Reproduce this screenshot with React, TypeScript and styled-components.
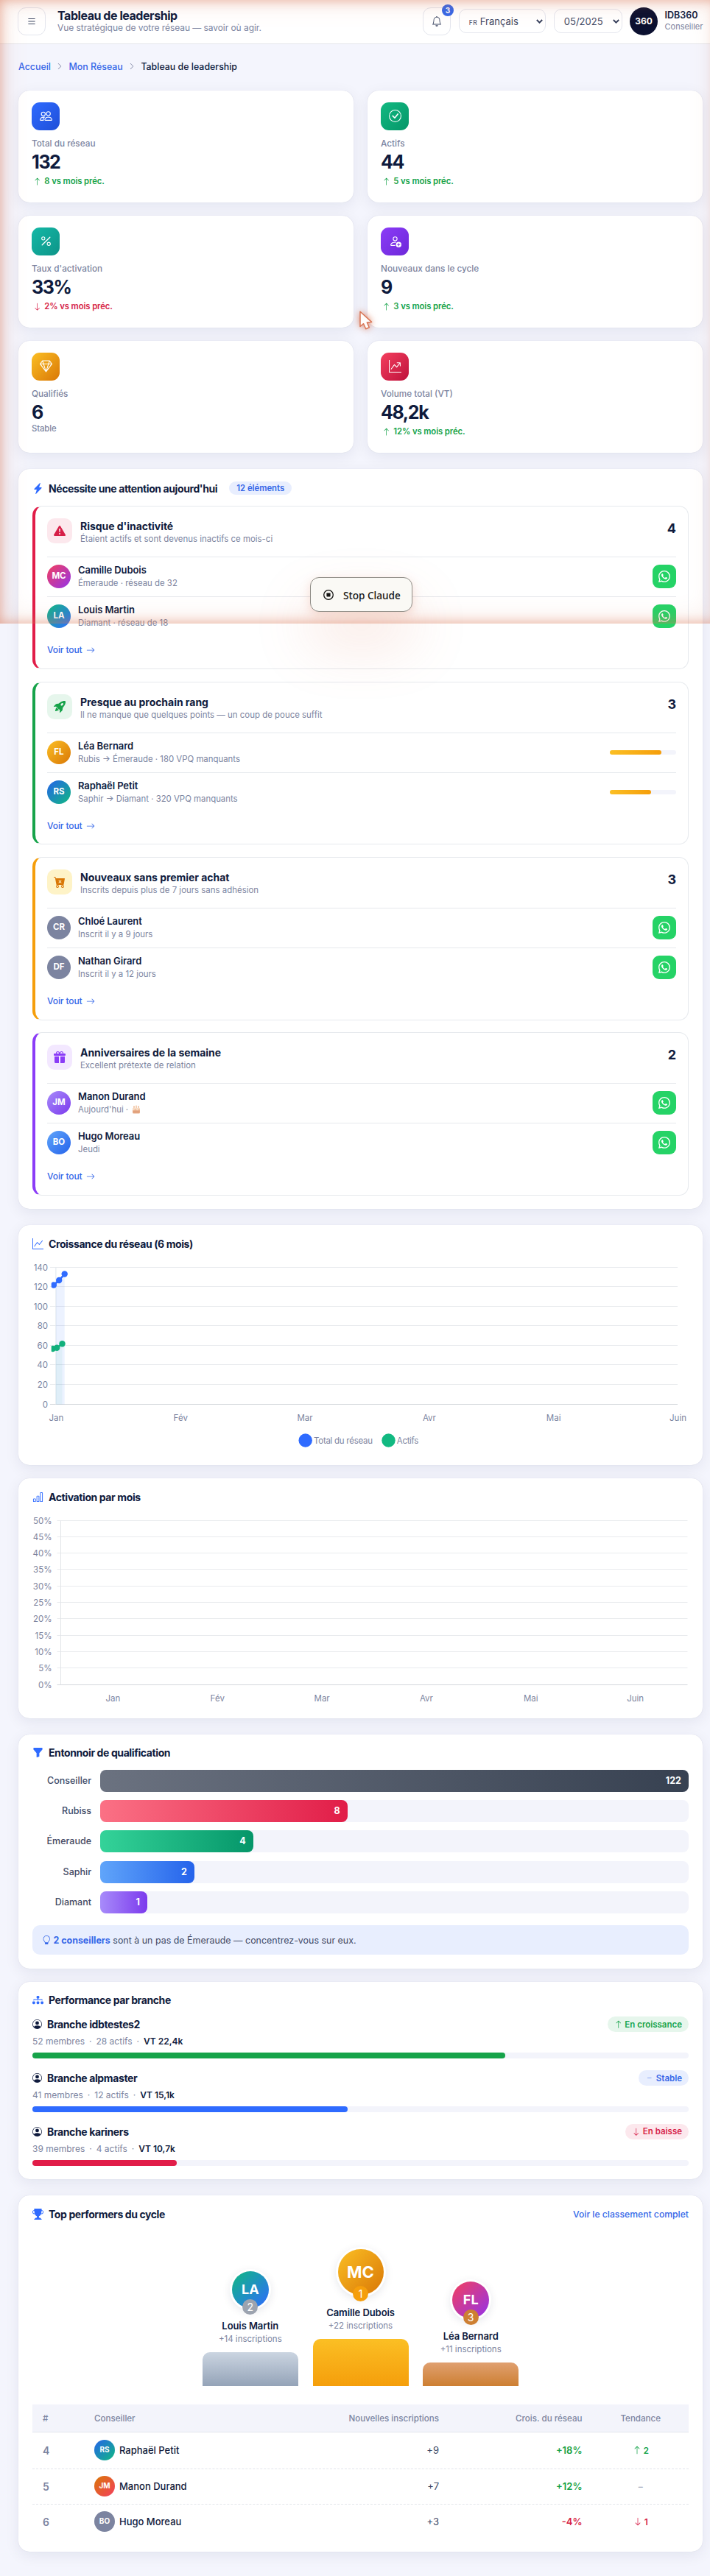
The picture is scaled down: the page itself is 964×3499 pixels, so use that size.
import React from 'react'
import styled, { createGlobalStyle } from 'styled-components'
import {
  BsArrowDown,
  BsArrowRight,
  BsArrowUp,
  BsBarChart,
  BsBell,
  BsCartXFill,
  BsCheckCircle,
  BsChevronRight,
  BsDash,
  BsDiagram3Fill,
  BsExclamationTriangleFill,
  BsFunnelFill,
  BsGem,
  BsGiftFill,
  BsGraphUp,
  BsGraphUpArrow,
  BsLightbulb,
  BsLightningChargeFill,
  BsList,
  BsPeople,
  BsPercent,
  BsPersonAdd,
  BsPersonCircle,
  BsRocketTakeoffFill,
  BsTrophyFill,
  BsWhatsapp,
} from 'react-icons/bs'

const colors = {
  ink: '#0f1b3d',
  text: '#3f4a66',
  muted: '#7c84a0',
  blue: '#2f6bff',
  link: '#3567e8',
  line: '#e6e9ed',
  track: '#f3f4fb',
  green: '#16a34a',
  red: '#d61f48',
}

type Trend = 'up' | 'down' | 'flat'

const kpis = [
  { label: 'Total du réseau', value: '132', delta: '8 vs mois préc.', trend: 'up', icon: <BsPeople />, from: '#2f6bff', to: '#1f4fd8' },
  { label: 'Actifs', value: '44', delta: '5 vs mois préc.', trend: 'up', icon: <BsCheckCircle />, from: '#12b981', to: '#059669' },
  { label: "Taux d'activation", value: '33%', delta: '2% vs mois préc.', trend: 'down', icon: <BsPercent />, from: '#14b8a6', to: '#0d9488' },
  { label: 'Nouveaux dans le cycle', value: '9', delta: '3 vs mois préc.', trend: 'up', icon: <BsPersonAdd />, from: '#8b3cf7', to: '#6d28d9' },
  { label: 'Qualifiés', value: '6', delta: 'Stable', trend: 'flat', icon: <BsGem />, from: '#fbbf24', to: '#d97706' },
  { label: 'Volume total (VT)', value: '48,2k', delta: '12% vs mois préc.', trend: 'up', icon: <BsGraphUpArrow />, from: '#f43f5e', to: '#be123c' },
]

const avatars: Record<string, string> = {
  pink: 'linear-gradient(135deg, #f43f5e, #9333ea)',
  teal: 'linear-gradient(135deg, #10b981, #2f6bff)',
  gold: 'linear-gradient(135deg, #fbbf24, #d97706)',
  sea: 'linear-gradient(135deg, #2563eb, #10b981)',
  grey: '#7c84a0',
  violet: 'linear-gradient(135deg, #a78bfa, #7c3aed)',
  sky: 'linear-gradient(135deg, #60a5fa, #2563eb)',
  fire: 'linear-gradient(135deg, #d97706, #f43f5e)',
}

interface Person {
  initials: string
  avatar: string
  name: string
  detail: string
  progress?: number
  cake?: boolean
}

interface Group {
  title: string
  subtitle: string
  count: number
  accent: string
  tint: string
  iconColor: string
  icon: React.ReactNode
  people: Person[]
}

const groups: Group[] = [
  {
    title: "Risque d'inactivité",
    subtitle: 'Étaient actifs et sont devenus inactifs ce mois-ci',
    count: 4,
    accent: '#e11d48',
    tint: '#fce8ed',
    iconColor: '#d61f48',
    icon: <BsExclamationTriangleFill />,
    people: [
      { initials: 'MC', avatar: 'pink', name: 'Camille Dubois', detail: 'Émeraude · réseau de 32' },
      { initials: 'LA', avatar: 'teal', name: 'Louis Martin', detail: 'Diamant · réseau de 18' },
    ],
  },
  {
    title: 'Presque au prochain rang',
    subtitle: 'Il ne manque que quelques points — un coup de pouce suffit',
    count: 3,
    accent: '#16a34a',
    tint: '#e6f6ec',
    iconColor: '#16a34a',
    icon: <BsRocketTakeoffFill />,
    people: [
      { initials: 'FL', avatar: 'gold', name: 'Léa Bernard', detail: 'Rubis → Émeraude · 180 VPQ manquants', progress: 78 },
      { initials: 'RS', avatar: 'sea', name: 'Raphaël Petit', detail: 'Saphir → Diamant · 320 VPQ manquants', progress: 62 },
    ],
  },
  {
    title: 'Nouveaux sans premier achat',
    subtitle: 'Inscrits depuis plus de 7 jours sans adhésion',
    count: 3,
    accent: '#f59e0b',
    tint: '#fef3c7',
    iconColor: '#d97706',
    icon: <BsCartXFill />,
    people: [
      { initials: 'CR', avatar: 'grey', name: 'Chloé Laurent', detail: 'Inscrit il y a 9 jours' },
      { initials: 'DF', avatar: 'grey', name: 'Nathan Girard', detail: 'Inscrit il y a 12 jours' },
    ],
  },
  {
    title: 'Anniversaires de la semaine',
    subtitle: 'Excellent prétexte de relation',
    count: 2,
    accent: '#8b3cf7',
    tint: '#f3e8ff',
    iconColor: '#8b3cf7',
    icon: <BsGiftFill />,
    people: [
      { initials: 'JM', avatar: 'violet', name: 'Manon Durand', detail: "Aujourd'hui · ", cake: true },
      { initials: 'BO', avatar: 'sky', name: 'Hugo Moreau', detail: 'Jeudi' },
    ],
  },
]

const funnel = [
  { label: 'Conseiller', value: 122, width: 100, from: '#6b7280', to: '#374151' },
  { label: 'Rubiss', value: 8, width: 42, from: '#fb7185', to: '#e11d48' },
  { label: 'Émeraude', value: 4, width: 26, from: '#34d399', to: '#059669' },
  { label: 'Saphir', value: 2, width: 16, from: '#60a5fa', to: '#2563eb' },
  { label: 'Diamant', value: 1, width: 8, from: '#a78bfa', to: '#7c3aed' },
]

const branches = [
  { name: 'idbtestes2', members: 52, active: 28, vt: '22,4k', trend: 'up', label: 'En croissance', width: 72, color: '#16a34a', tint: '#e6f6ec', fg: '#16a34a' },
  { name: 'alpmaster', members: 41, active: 12, vt: '15,1k', trend: 'flat', label: 'Stable', width: 48, color: '#2f6bff', tint: '#e8eefe', fg: '#3567e8' },
  { name: 'kariners', members: 39, active: 4, vt: '10,7k', trend: 'down', label: 'En baisse', width: 22, color: '#e11d48', tint: '#fce8ed', fg: '#d61f48' },
]

const podium = [
  { place: 2, initials: 'LA', avatar: 'teal', name: 'Louis Martin', signups: 14, height: 46, badge: '#9ca3af', from: '#cbd5e1', to: '#94a3b8' },
  { place: 1, initials: 'MC', avatar: 'gold', name: 'Camille Dubois', signups: 22, height: 64, badge: '#f59e0b', from: '#fbbf24', to: '#f59e0b' },
  { place: 3, initials: 'FL', avatar: 'pink', name: 'Léa Bernard', signups: 11, height: 32, badge: '#cd7f32', from: '#e0a070', to: '#cd7f32' },
]

const ranking = [
  { rank: 4, initials: 'RS', avatar: 'sea', name: 'Raphaël Petit', signups: '+9', growth: '+18%', trend: 'up', move: 2 },
  { rank: 5, initials: 'JM', avatar: 'fire', name: 'Manon Durand', signups: '+7', growth: '+12%', trend: 'flat', move: 0 },
  { rank: 6, initials: 'BO', avatar: 'grey', name: 'Hugo Moreau', signups: '+3', growth: '-4%', trend: 'down', move: 1 },
]

const months = ['Jan', 'Fév', 'Mar', 'Avr', 'Mai', 'Juin']

const TrendIcon = ({ trend }: { trend: string }) => {
  if (trend === 'up') return <BsArrowUp />
  if (trend === 'down') return <BsArrowDown />
  return <BsDash />
}

const Cake = () => (
  <CakeSvg width="12" height="12" viewBox="0 0 12 12">
    <path d="M3 1v3M6 .6V4M9 1v3" stroke="#e9a06a" strokeWidth="1" />
    <rect x="1" y="4" width="10" height="7.5" rx="1.5" fill="#e9b08c" />
    <path d="M1 6.5q1.3 1.5 2.5 0t2.5 0 2.5 0 2.5 0V5.2Q11 4 9.500 4h-7Q1 4 1 5.200z" fill="#f8dcc4" />
    <path d="M1.500 9.300h9" stroke="#cf7f55" strokeWidth=".8" />
  </CakeSvg>
)

const Chevron = () => (
  <svg width="9" height="6" viewBox="0 0 9 6">
    <path d="M.8 1l3.700 3.700L8.200 1" fill="none" stroke="#353f5c" strokeWidth="1.900" />
  </svg>
)

const GrowthChart = () => {
  const top = 9.600
  const bottom = 195.600
  const left = 31.900
  const right = 876
  const ticks = [140, 120, 100, 80, 60, 40, 20, 0]
  return (
    <ChartSvg width="890" height="265" viewBox="0 0 890 265">
      {ticks.map(t => {
        const y = Math.round(bottom - ((bottom - top) * t) / 140) - 0.500
        return (
          <g key={t}>
            <line x1={left - 8} x2={right} y1={y} y2={y} stroke={t === 0 ? '#d3d7dc' : '#e9ebee'} />
            <text x={21} y={y + 4} textAnchor="end">{t}</text>
          </g>
        )
      })}
      <line x1={left} x2={left} y1={top} y2={bottom} stroke="#dfe7ee" />
      <path d="M32 30L36.200 27 43.700 18.500V195.500H32z" fill="#2f6bff" fillOpacity=".09" />
      <path d="M32 119L33.200 119 40.500 113.500V195.500H32z" fill="#12b981" fillOpacity=".06" />
      <path d="M28.900 33.500L36.200 27 43.700 18.500" stroke="#2f6bff" strokeWidth="2.500" fill="none" />
      <path d="M27.700 120L33.200 118.800 40.500 113.300" stroke="#12b981" strokeWidth="2.500" fill="none" />
      <clipPath id="plot">
        <rect x="25.700" y="0" width="864" height="200" />
      </clipPath>
      <g clipPath="url(#plot)">
        {[[28.900, 33.500], [36.200, 27], [43.700, 18.500]].map(([x, y]) => <circle key={x} cx={x} cy={y} r="4.200" fill="#2f6bff" />)}
        {[[27.700, 120], [33.200, 118.800], [40.500, 113.300]].map(([x, y]) => <circle key={x} cx={x} cy={y} r="4.200" fill="#12b07c" />)}
      </g>
      {months.map((m, i) => (
        <text key={m} x={left + (i * (right - left)) / 5 + 0.500} y="217.500" textAnchor="middle">{m}</text>
      ))}
      <circle cx="370.700" cy="244.500" r="9.200" fill="#2f6bff" />
      <text x="382" y="248.500" textLength="80">Total du réseau</text>
      <circle cx="483.500" cy="244.500" r="9.200" fill="#12b981" />
      <text x="494.800" y="248.500" textLength="29.500">Actifs</text>
    </ChartSvg>
  )
}

const ActivationChart = () => {
  const top = 9.500
  const bottom = 232.500
  const left = 38.500
  const right = 889.500
  const ticks = [50, 45, 40, 35, 30, 25, 20, 15, 10, 5, 0]
  return (
    <ChartSvg width="890" height="265" viewBox="0 0 890 265">
      {ticks.map(t => {
        const y = Math.round(bottom - ((bottom - top) * t) / 50) - 0.500
        return (
          <g key={t}>
            <line x1={left - 5} x2={right} y1={y} y2={y} stroke={t === 0 ? '#d3d7dc' : '#e9ebee'} />
            <text x={26.500} y={y + 4} textAnchor="end">{t}%</text>
          </g>
        )
      })}
      <line x1={left} x2={left} y1={top} y2={bottom} stroke="#e2e4e8" />
      {months.map((m, i) => (
        <text key={m} x={left + 70.900 + i * 141.850} y="254.500" textAnchor="middle">{m}</text>
      ))}
    </ChartSvg>
  )
}

const PersonRow = ({ person }: { person: Person }) => (
  <Row>
    <Avatar $bg={avatars[person.avatar]} $size={32}>{person.initials}</Avatar>
    <RowText>
      <RowName>{person.name}</RowName>
      <RowDetail>
        {person.detail}
        {person.cake && <Cake />}
      </RowDetail>
    </RowText>
    {person.progress ? (
      <MiniTrack>
        <MiniFill style={{ width: `${person.progress}%` }} />
      </MiniTrack>
    ) : (
      <WhatsappButton>
        <BsWhatsapp />
      </WhatsappButton>
    )}
  </Row>
)

const App = () => {
  return (
    <Page>
      <GlobalStyle />
      <Header>
        <SquareButton>
          <BsList />
        </SquareButton>
        <Heading>
          <PageTitle>Tableau de leadership</PageTitle>
          <PageSubtitle>Vue stratégique de votre réseau — savoir où agir.</PageSubtitle>
        </Heading>
        <Tools>
          <SquareButton>
            <BsBell />
            <Notification>3</Notification>
          </SquareButton>
          <Select $width={118.500}>
            <span><Flag>FR</Flag> Français</span>
            <Chevron />
          </Select>
          <Select $width={93.500}>
            <span>05/2025</span>
            <Chevron />
          </Select>
          <Profile>
            <ProfileAvatar>360</ProfileAvatar>
            <ProfileText>
              <ProfileName>IDB360</ProfileName>
              <ProfileRole>Conseiller</ProfileRole>
            </ProfileText>
          </Profile>
        </Tools>
      </Header>

      <Main>
        <Breadcrumb>
          <a>Accueil</a>
          <BsChevronRight />
          <a>Mon Réseau</a>
          <BsChevronRight />
          <span>Tableau de leadership</span>
        </Breadcrumb>

        <KpiGrid>
          {kpis.map(kpi => (
            <KpiCard key={kpi.label}>
              <KpiIcon $from={kpi.from} $to={kpi.to}>{kpi.icon}</KpiIcon>
              <KpiLabel>{kpi.label}</KpiLabel>
              <KpiValue>{kpi.value}</KpiValue>
              <KpiDelta $trend={kpi.trend as Trend}>
                {kpi.trend !== 'flat' && <TrendIcon trend={kpi.trend} />}
                {kpi.delta}
              </KpiDelta>
            </KpiCard>
          ))}
        </KpiGrid>

        <Card $height={1005.300} $gap={21.700}>
          <CardHead $height={50.600} $top={3}>
            <BsLightningChargeFill />
            <CardTitle>Nécessite une attention aujourd'hui</CardTitle>
            <CountPill>12 éléments</CountPill>
          </CardHead>
          <Groups>
            {groups.map(group => (
              <GroupCard key={group.title} $accent={group.accent}>
                <GroupHead>
                  <GroupIcon $bg={group.tint} $fg={group.iconColor}>{group.icon}</GroupIcon>
                  <GroupText>
                    <GroupTitle>{group.title}</GroupTitle>
                    <GroupSubtitle>{group.subtitle}</GroupSubtitle>
                  </GroupText>
                  <GroupCount>{group.count}</GroupCount>
                </GroupHead>
                {group.people.map(person => <PersonRow key={person.name} person={person} />)}
                <SeeAll>
                  Voir tout <BsArrowRight />
                </SeeAll>
              </GroupCard>
            ))}
          </Groups>
        </Card>

        <Card $height={326.300} $gap={18}>
          <CardHead $height={48} $top={4}>
            <BsGraphUp />
            <CardTitle>Croissance du réseau (6 mois)</CardTitle>
          </CardHead>
          <GrowthChart />
        </Card>

        <Card $height={326} $gap={21.700}>
          <CardHead $height={48} $top={4}>
            <BsBarChart />
            <CardTitle>Activation par mois</CardTitle>
          </CardHead>
          <ActivationChart />
        </Card>

        <Card $height={318.300} $gap={18}>
          <CardHead $height={48.300} $top={2}>
            <BsFunnelFill />
            <CardTitle>Entonnoir de qualification</CardTitle>
          </CardHead>
          <FunnelList>
            {funnel.map(step => (
              <FunnelRow key={step.label}>
                <FunnelLabel>{step.label}</FunnelLabel>
                <FunnelTrack>
                  <FunnelBar $from={step.from} $to={step.to} style={{ width: `${step.width}%` }}>{step.value}</FunnelBar>
                </FunnelTrack>
              </FunnelRow>
            ))}
          </FunnelList>
          <Tip>
            <BsLightbulb />
            <p><b>2 conseillers</b> sont à un pas de Émeraude — concentrez-vous sur eux.</p>
          </Tip>
        </Card>

        <Card $height={268} $gap={21.700}>
          <CardHead $height={47.500} $top={2}>
            <BsDiagram3Fill />
            <CardTitle>Performance par branche</CardTitle>
          </CardHead>
          {branches.map(branch => (
            <Branch key={branch.name}>
              <BranchHead>
                <BsPersonCircle />
                <BranchName>Branche {branch.name}</BranchName>
                <BranchPill $bg={branch.tint} $fg={branch.fg}>
                  <TrendIcon trend={branch.trend} />
                  {branch.label}
                </BranchPill>
              </BranchHead>
              <BranchStats>
                <span>{branch.members} membres</span>
                <i>·</i>
                <span>{branch.active} actifs</span>
                <i>·</i>
                <b>VT {branch.vt}</b>
              </BranchStats>
              <BranchTrack>
                <BranchFill $color={branch.color} style={{ width: `${branch.width}%` }} />
              </BranchTrack>
            </Branch>
          ))}
        </Card>

        <Card $height={484.300} $gap={33}>
          <CardHead $height={51} $top={0}>
            <BsTrophyFill />
            <CardTitle>Top performers du cycle</CardTitle>
            <HeadLink>Voir le classement complet</HeadLink>
          </CardHead>
          <Podium>
            {podium.map(p => (
              <PodiumColumn key={p.place}>
                <PodiumAvatar $bg={avatars[p.avatar]} $big={p.place === 1}>
                  {p.initials}
                  <Medal $bg={p.badge}>{p.place}</Medal>
                </PodiumAvatar>
                <PodiumName>{p.name}</PodiumName>
                <PodiumDetail>+{p.signups} inscriptions</PodiumDetail>
                <PodiumBlock $from={p.from} $to={p.to} $height={p.height} />
              </PodiumColumn>
            ))}
          </Podium>
          <Table>
            <TableHead>
              <span>#</span>
              <span>Conseiller</span>
              <Right>Nouvelles inscriptions</Right>
              <Right>Crois. du réseau</Right>
              <Center>Tendance</Center>
            </TableHead>
            {ranking.map(r => (
              <TableRow key={r.rank}>
                <Rank>{r.rank}</Rank>
                <Advisor>
                  <Avatar $bg={avatars[r.avatar]} $size={28}>{r.initials}</Avatar>
                  {r.name}
                </Advisor>
                <Right>{r.signups}</Right>
                <Growth $down={r.trend === 'down'}>{r.growth}</Growth>
                <Move $trend={r.trend as Trend}>
                  {r.trend === 'flat' ? '–' : <><TrendIcon trend={r.trend} /> {r.move}</>}
                </Move>
              </TableRow>
            ))}
          </Table>
        </Card>
      </Main>

      <GlowClip>
        <GlowFrame />
      </GlowClip>
      <StopButton>
        <svg width="16" height="16" viewBox="0 0 16 16">
          <circle cx="8" cy="8" r="6.300" fill="none" stroke="#141413" strokeWidth="1.300" />
          <rect x="5.400" y="5.400" width="5.200" height="5.200" rx=".8" fill="#141413" />
        </svg>
        Stop Claude
      </StopButton>
      <Pointer width="18" height="26" viewBox="0 0 18 26">
        <path d="M1 1.200V21.500L5.600 17.700L8.700 24.700L13.300 22.700L10.300 15.900L16.600 15.400Z" fill="#fffdfb" stroke="#d97757" strokeWidth="1.500" strokeLinejoin="round" />
      </Pointer>
    </Page>
  )
}

export default App

const GlobalStyle = createGlobalStyle`
  * {
    box-sizing: border-box;
  }

  body {
    margin: 0;
    background: #f4f5fd;
    font-family: 'Inter', sans-serif;
    color: ${colors.ink};
  }

  p {
    margin: 0;
  }
`

const Page = styled.div`
  position: relative;
  width: 964px;
  height: 3499px;
  overflow: hidden;
`

const Header = styled.header`
  display: flex;
  align-items: center;
  height: 60px;
  padding: 0 9px 2px 24px;
  background: #fff;
  border-bottom: 1px solid #e3e5ea;
`

const SquareButton = styled.div`
  position: relative;
  display: flex;
  align-items: center;
  justify-content: center;
  width: 38px;
  height: 38px;
  border: 1px solid #e4e6ee;
  border-radius: 11px;
  color: ${colors.text};
  font-size: 14px;
`

const Heading = styled.div`
  margin-left: 16px;
`

const PageTitle = styled.h1`
  margin: 0;
  font-size: 16px;
  font-weight: 700;
  line-height: 18px;
  letter-spacing: -0.45px;
`

const PageSubtitle = styled.p`
  font-size: 12px;
  line-height: 16px;
  letter-spacing: -0.06px;
  color: ${colors.muted};
`

const Tools = styled.div`
  display: flex;
  align-items: center;
  gap: 10.7px;
  margin-left: auto;
`

const Notification = styled.span`
  position: absolute;
  top: -5px;
  right: -5px;
  width: 16px;
  height: 16px;
  border-radius: 50%;
  background: ${colors.link};
  color: #fff;
  font-size: 10px;
  font-weight: 700;
  line-height: 16px;
  text-align: center;
`

const Select = styled.div<{ $width: number }>`
  display: flex;
  align-items: center;
  justify-content: space-between;
  width: ${props => props.$width}px;
  height: 33px;
  padding: 0 3px 0 13px;
  border: 1px solid #e4e6ee;
  border-radius: 10px;
  font-size: 13px;
  color: ${colors.text};
`

const Flag = styled.span`
  font-size: 8.5px;
  letter-spacing: 0.5px;
`

const Profile = styled.div`
  display: flex;
  align-items: center;
  gap: 9.5px;
  margin-left: -1px;
`

const ProfileAvatar = styled.div`
  width: 38px;
  height: 38px;
  border-radius: 50%;
  background: #0b1030;
  color: #fff;
  font-size: 12px;
  font-weight: 700;
  line-height: 38px;
  text-align: center;
`

const ProfileText = styled.div`
  width: 52.5px;
`

const ProfileName = styled.div`
  font-size: 12.5px;
  font-weight: 600;
  line-height: 16px;
`

const ProfileRole = styled.div`
  font-size: 11px;
  line-height: 15px;
  color: ${colors.muted};
`

const Main = styled.main`
  padding: 20px 10px 0 25px;
`

const Breadcrumb = styled.nav`
  display: flex;
  align-items: center;
  gap: 7.3px;
  height: 20px;
  margin-bottom: 22.7px;
  font-size: 12.4px;
  font-weight: 550;

  a {
    color: ${colors.link};
  }

  svg {
    width: 10px;
    height: 10px;
    color: ${colors.muted};
  }
`

const KpiGrid = styled.section`
  display: grid;
  grid-template-columns: 1fr 1fr;
  grid-auto-rows: 152.3px;
  gap: 17.7px 19px;
  margin-bottom: 21.7px;
`

const cardShadow = '0 0 1px rgba(20, 30, 70, 0.18), 0 5px 20px rgba(20, 30, 70, 0.075)'

const KpiCard = styled.article`
  padding: 16px 18px;
  border-radius: 15px;
  background: #fff;
  box-shadow: ${cardShadow};
`

const KpiIcon = styled.div<{ $from: string; $to: string }>`
  display: flex;
  align-items: center;
  justify-content: center;
  width: 38px;
  height: 38px;
  border-radius: 11px;
  background: linear-gradient(135deg, ${props => props.$from}, ${props => props.$to});
  color: #fff;
  font-size: 17px;
`

const KpiLabel = styled.div`
  margin-top: 9px;
  font-size: 11.75px;
  font-weight: 500;
  line-height: 18px;
  color: ${colors.muted};
`

const KpiValue = styled.div`
  margin-top: 1px;
  font-size: 25px;
  font-weight: 700;
  line-height: 30px;
  letter-spacing: -1.4px;
`

const KpiDelta = styled.div<{ $trend: Trend }>`
  display: flex;
  align-items: center;
  gap: 4px;
  margin-top: ${props => (props.$trend === 'flat' ? 0.5 : 4)}px;
  padding-left: ${props => (props.$trend === 'flat' ? 0 : 2)}px;
  font-size: 11.3px;
  font-weight: ${props => (props.$trend === 'flat' ? 500 : 600)};
  line-height: 15px;
  letter-spacing: -0.1px;
  color: ${props => ({ up: colors.green, down: colors.red, flat: colors.muted })[props.$trend]};
`

const Card = styled.section<{ $height: number; $gap: number }>`
  height: ${props => props.$height}px;
  margin-bottom: ${props => props.$gap}px;
  padding: 0 19px;
  border-radius: 15px;
  background: #fff;
  box-shadow: ${cardShadow};
`

const CardHead = styled.div<{ $height: number; $top: number }>`
  display: flex;
  align-items: center;
  height: ${props => props.$height}px;
  padding-top: ${props => props.$top}px;

  > svg {
    width: 15px;
    height: 15px;
    margin-right: 7px;
    color: ${colors.blue};
  }
`

const CardTitle = styled.h2`
  margin: 0;
  font-size: 14px;
  font-weight: 650;
  letter-spacing: -0.4px;
  white-space: nowrap;
`

const CountPill = styled.span`
  margin-left: 16px;
  padding: 0 10px;
  border-radius: 9px;
  background: #e8eefe;
  color: ${colors.link};
  font-size: 11.3px;
  font-weight: 600;
  line-height: 18px;
`

const HeadLink = styled.a`
  margin-left: auto;
  color: ${colors.link};
  font-size: 12.2px;
  font-weight: 500;
`

const Groups = styled.div`
  display: grid;
  grid-auto-rows: 221.7px;
  gap: 16.7px;
`

const GroupCard = styled.article<{ $accent: string }>`
  padding: 0 16px;
  border: 1px solid ${colors.line};
  border-left: 4px solid ${props => props.$accent};
  border-radius: 13px;
`

const GroupHead = styled.div`
  display: flex;
  height: 68px;
  padding-top: 16px;
`

const GroupIcon = styled.div<{ $bg: string; $fg: string }>`
  display: flex;
  align-items: center;
  justify-content: center;
  width: 34px;
  height: 34px;
  border-radius: 10px;
  background: ${props => props.$bg};
  color: ${props => props.$fg};
  font-size: 16px;
`

const GroupText = styled.div`
  flex: 1;
  padding: 2px 0 0 11px;
`

const GroupTitle = styled.h3`
  margin: 0;
  font-size: 14px;
  font-weight: 650;
  line-height: 18px;
  letter-spacing: -0.04px;
`

const GroupSubtitle = styled.p`
  font-size: 11.45px;
  line-height: 17px;
  color: ${colors.muted};
`

const GroupCount = styled.div`
  font-size: 18px;
  font-weight: 700;
  line-height: 28px;
`

const Row = styled.div`
  display: flex;
  align-items: center;
  height: 54px;
  padding-bottom: 1px;
  border-top: 1px solid ${colors.line};
`

const Avatar = styled.div<{ $bg: string; $size: number }>`
  width: ${props => props.$size}px;
  height: ${props => props.$size}px;
  border-radius: 50%;
  background: ${props => props.$bg};
  color: #fff;
  font-size: ${props => (props.$size > 30 ? 11.5 : 10)}px;
  font-weight: 700;
  line-height: ${props => props.$size - 1}px;
  text-align: center;
`

const RowText = styled.div`
  flex: 1;
  margin-left: 10px;
`

const RowName = styled.div`
  font-size: 13px;
  font-weight: 600;
  line-height: 18px;
  letter-spacing: -0.08px;
`

const RowDetail = styled.div`
  font-size: 11.4px;
  line-height: 18px;
  color: ${colors.muted};
`

const CakeSvg = styled.svg`
  margin-left: 2px;
  vertical-align: -2px;
`

const MiniTrack = styled.div`
  width: 90px;
  height: 6px;
  border-radius: 3px;
  background: ${colors.track};
`

const MiniFill = styled.div`
  height: 6px;
  border-radius: 3px;
  background: linear-gradient(90deg, #fbbf24, #f59e0b);
`

const WhatsappButton = styled.div`
  display: flex;
  align-items: center;
  justify-content: center;
  width: 32px;
  height: 32px;
  border-radius: 9px;
  background: #25d366;
  color: #fff;
  font-size: 16px;
`

const SeeAll = styled.a`
  display: flex;
  align-items: center;
  gap: 5px;
  margin-top: 10px;
  font-size: 12px;
  font-weight: 550;
  line-height: 18px;
  letter-spacing: -0.1px;
  color: ${colors.link};
`

const ChartSvg = styled.svg`
  display: block;
  overflow: visible;

  text {
    font-size: 11.5px;
    fill: ${colors.muted};
  }
`

const FunnelList = styled.div`
  display: grid;
  gap: 11.25px;
`

const FunnelRow = styled.div`
  display: flex;
  align-items: center;
  height: 30px;
`

const FunnelLabel = styled.div`
  width: 80px;
  margin-right: 12px;
  font-size: 12.5px;
  font-weight: 500;
  line-height: 28px;
  text-align: right;
  color: ${colors.text};
`

const FunnelTrack = styled.div`
  flex: 1;
  border-radius: 8px;
  background: ${colors.track};
`

const FunnelBar = styled.div<{ $from: string; $to: string }>`
  height: 30px;
  padding-right: 10px;
  border-radius: 8px;
  background: linear-gradient(90deg, ${props => props.$from}, ${props => props.$to});
  color: #fff;
  font-size: 12.5px;
  font-weight: 700;
  line-height: 29px;
  text-align: right;
`

const Tip = styled.div`
  display: flex;
  align-items: center;
  gap: 3px;
  height: 40.5px;
  margin-top: 16px;
  padding: 0 13px;
  border-radius: 10px;
  background: #e8eefe;
  color: ${colors.text};
  font-size: 12.45px;

  b,
  svg {
    color: ${colors.link};
  }
`

const Branch = styled.div`
  height: 72.7px;
`

const BranchHead = styled.div`
  display: flex;
  align-items: center;
  height: 21px;

  > svg {
    width: 13px;
    height: 13px;
  }
`

const BranchName = styled.div`
  flex: 1;
  margin-left: 7px;
  font-size: 14px;
  font-weight: 650;
  letter-spacing: -0.38px;
`

const BranchPill = styled.div<{ $bg: string; $fg: string }>`
  display: flex;
  align-items: center;
  gap: 3px;
  height: 21px;
  padding: 0 9px;
  border-radius: 11px;
  background: ${props => props.$bg};
  color: ${props => props.$fg};
  font-size: 11.5px;
  font-weight: 600;
`

const BranchStats = styled.div`
  display: flex;
  gap: 6px;
  margin-top: 2px;
  font-size: 12px;
  line-height: 22px;
  color: ${colors.muted};

  b {
    font-weight: 600;
    color: ${colors.ink};
  }

  i {
    font-style: normal;
  }
`

const BranchTrack = styled.div`
  height: 8px;
  margin-top: 4px;
  border-radius: 4px;
  background: ${colors.track};
`

const BranchFill = styled.div<{ $color: string }>`
  height: 8px;
  border-radius: 4px;
  background: ${props => props.$color};
`

const Podium = styled.div`
  display: flex;
  justify-content: center;
  align-items: flex-end;
  gap: 19.7px;
  height: 208.3px;
`

const PodiumColumn = styled.div`
  display: flex;
  flex-direction: column;
  align-items: center;
  width: 130px;
`

const PodiumAvatar = styled.div<{ $bg: string; $big: boolean }>`
  position: relative;
  display: flex;
  align-items: center;
  justify-content: center;
  width: ${props => (props.$big ? 62 : 50)}px;
  height: ${props => (props.$big ? 62 : 50)}px;
  border-radius: 50%;
  background: ${props => props.$bg};
  box-shadow: 0 0 0 3px #fff, 0 3px 14px rgba(20, 30, 70, 0.16);
  color: #fff;
  font-size: ${props => (props.$big ? 22 : 18)}px;
  font-weight: 700;
`

const Medal = styled.span<{ $bg: string }>`
  position: absolute;
  bottom: -9px;
  left: 50%;
  width: 21px;
  height: 21px;
  margin-left: -10.5px;
  border-radius: 50%;
  background: ${props => props.$bg};
  font-size: 14px;
  font-weight: 400;
  line-height: 21px;
  text-align: center;
`

const PodiumName = styled.div`
  margin-top: 15px;
  font-size: 13px;
  font-weight: 600;
  line-height: 18px;
  letter-spacing: -0.08px;
`

const PodiumDetail = styled.div`
  margin-bottom: 9px;
  font-size: 11.5px;
  line-height: 18px;
  color: ${colors.muted};
`

const PodiumBlock = styled.div<{ $from: string; $to: string; $height: number }>`
  width: 100%;
  height: ${props => props.$height}px;
  border-radius: 10px 10px 0 0;
  background: linear-gradient(180deg, ${props => props.$from}, ${props => props.$to});
`

const Table = styled.div`
  margin-top: 25px;
`

const TableLine = styled.div`
  display: grid;
  grid-template-columns: 70px 1fr 200px 194.5px 130.5px;
  align-items: center;

  > * {
    padding: 0 14px;
  }
`

const TableHead = styled(TableLine)`
  height: 38.5px;
  border-bottom: 1px solid #e2e5ec;
  background: ${colors.track};
  color: ${colors.muted};
  font-size: 11.6px;
  font-weight: 500;
`

const TableRow = styled(TableLine)`
  height: 48.2px;
  font-size: 13px;

  & + & {
    border-top: 1px dashed #e2e5ea;
  }
`

const Right = styled.div`
  text-align: right;
  color: inherit;

  ${TableRow} & {
    color: ${colors.text};
  }
`

const Center = styled.div`
  text-align: center;
`

const Rank = styled.div`
  font-size: 14px;
  font-weight: 600;
  color: ${colors.muted};
`

const Advisor = styled.div`
  display: flex;
  align-items: center;
  gap: 6px;
  font-weight: 500;
`

const Growth = styled.div<{ $down: boolean }>`
  font-weight: 600;
  text-align: right;
  color: ${props => (props.$down ? colors.red : colors.green)};
`

const Move = styled.div<{ $trend: Trend }>`
  display: flex;
  align-items: center;
  justify-content: center;
  gap: 3px;
  font-size: 12px;
  font-weight: 600;
  color: ${props => ({ up: colors.green, down: colors.red, flat: '#a4aabd' })[props.$trend]};
`

const GlowClip = styled.div`
  position: absolute;
  top: 0;
  left: 0;
  width: 964px;
  height: 847px;
  overflow: hidden;
  pointer-events: none;
`

const GlowFrame = styled.div`
  width: 974px;
  height: 847px;
  box-shadow: inset 0 0 16px rgba(217, 119, 87, 0.58), inset 0 0 38px rgba(217, 119, 87, 0.2);
`

const StopButton = styled.div`
  position: absolute;
  top: 784px;
  left: 421px;
  display: flex;
  align-items: center;
  gap: 12px;
  width: 139px;
  height: 47px;
  padding: 1px 0 0 16px;
  border: 1px solid #8d8b85;
  border-radius: 12px;
  background: #faf9f5;
  box-shadow: 0 40px 80px rgba(217, 119, 87, 0.22), 0 4px 14px rgba(217, 119, 87, 0.22);
  color: #141413;
  font-family: 'Noto Sans', sans-serif;
  font-size: 13.6px;
  font-weight: 500;
  white-space: nowrap;
`

const Pointer = styled.svg`
  position: absolute;
  top: 422px;
  left: 488px;
  overflow: visible;
  filter: drop-shadow(0 0 5px rgba(217, 119, 87, 0.9));
`
